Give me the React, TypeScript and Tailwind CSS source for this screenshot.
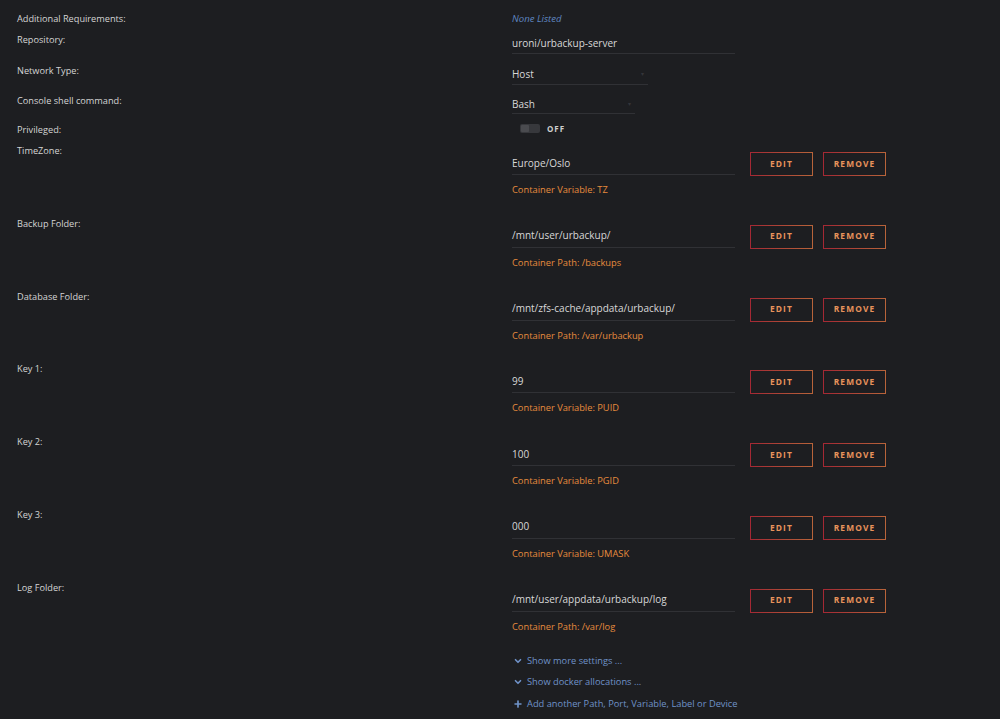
import { ChevronDown, Plus } from 'lucide-react'

type PathRow = {
  label: string
  value: string
  kind: 'Variable' | 'Path'
  target: string
}

const rows: PathRow[] = [
  { label: 'TimeZone:', value: 'Europe/Oslo', kind: 'Variable', target: 'TZ' },
  { label: 'Backup Folder:', value: '/mnt/user/urbackup/', kind: 'Path', target: '/backups' },
  { label: 'Database Folder:', value: '/mnt/zfs-cache/appdata/urbackup/', kind: 'Path', target: '/var/urbackup' },
  { label: 'Key 1:', value: '99', kind: 'Variable', target: 'PUID' },
  { label: 'Key 2:', value: '100', kind: 'Variable', target: 'PGID' },
  { label: 'Key 3:', value: '000', kind: 'Variable', target: 'UMASK' },
  { label: 'Log Folder:', value: '/mnt/user/appdata/urbackup/log', kind: 'Path', target: '/var/log' },
]

function Label({ children }: { children: string }) {
  return <div className="w-[512px] shrink-0 pl-[17px] pt-px text-[9.2px] leading-[14px] text-[#d4d4d4]">{children}</div>
}

function GradientButton({ children }: { children: string }) {
  return (
    <div className="flex h-[24px] w-[63px] items-center justify-center border border-solid bg-[#1d1e21] text-[8.4px] font-bold tracking-[1.1px] text-[#e8935c] [border-image:linear-gradient(90deg,#a42834,#b8643a)_1]">
      {children}
    </div>
  )
}

function SelectBox({ value, width }: { value: string; width: string }) {
  return (
    <div className={`flex items-center justify-between border-b border-[#303135] pr-1 ${width}`}>
      <span>{value}</span>
      <span className="text-[6px] text-[#34353a]">▾</span>
    </div>
  )
}

export default function App() {
  return (
    <div
      className="min-h-[719px] w-[1000px] bg-[#1d1e21] pt-[11px] text-[10px] text-[#d8d8d8]"
      style={{ fontFamily: '"Open Sans", "Liberation Sans", sans-serif' }}
    >
      <div className="flex h-[21px]">
        <Label>Additional Requirements:</Label>
        <div className="pt-px text-[9.6px] leading-[14px] italic text-[#5f86c0]">None Listed</div>
      </div>

      <div className="flex h-[31px]">
        <Label>Repository:</Label>
        <div className="flex h-[22px] w-[223px] items-center border-b border-[#303135] pt-[2px]">uroni/urbackup-server</div>
      </div>

      <div className="flex h-[30px]">
        <Label>Network Type:</Label>
        <div className="flex h-[22px] items-stretch pt-[2px]">
          <SelectBox value="Host" width="w-[136px]" />
        </div>
      </div>

      <div className="flex h-[29px]">
        <Label>Console shell command:</Label>
        <div className="flex h-[21px] items-stretch pt-[2px]">
          <SelectBox value="Bash" width="w-[123px]" />
        </div>
      </div>

      <div className="flex h-[21px] items-start">
        <Label>Privileged:</Label>
        <div className="flex h-[13px] items-center gap-[7px] pl-[8px]">
          <div className="flex h-[9px] w-[20px] items-center rounded-[2px] bg-[#37383c] px-px">
            <div className="h-[7px] w-[8px] rounded-[1px] bg-[#4a4b4f]" />
          </div>
          <span className="text-[8px] font-bold tracking-[1px] text-[#cfcfcf]">OFF</span>
        </div>
      </div>

      {rows.map((row) => (
        <div key={row.label} className="flex h-[72.8px]">
          <Label>{row.label}</Label>
          <div className="flex flex-col pt-[9px]">
            <div className="flex items-start gap-[10px]">
              <div className="flex h-[23px] w-[223px] items-center border-b border-[#303135]">{row.value}</div>
              <div className="ml-[5px]">
                <GradientButton>EDIT</GradientButton>
              </div>
              <GradientButton>REMOVE</GradientButton>
            </div>
            <div className="mt-[7px] text-[9.3px] leading-[14px] text-[#e68c3e]">
              Container {row.kind}: {row.target}
            </div>
          </div>
        </div>
      ))}

      <div className="flex flex-col gap-[7.5px] pl-[513px] pt-px text-[9.3px] text-[#6f92c8]">
        <div className="flex items-center gap-[4px] leading-[14px]">
          <ChevronDown size={10} strokeWidth={4} />
          <span>Show more settings ...</span>
        </div>
        <div className="flex items-center gap-[4px] leading-[14px]">
          <ChevronDown size={10} strokeWidth={4} />
          <span>Show docker allocations ...</span>
        </div>
        <div className="flex items-center gap-[4px] leading-[14px]">
          <Plus size={10} strokeWidth={4} />
          <span>Add another Path, Port, Variable, Label or Device</span>
        </div>
      </div>
    </div>
  )
}
